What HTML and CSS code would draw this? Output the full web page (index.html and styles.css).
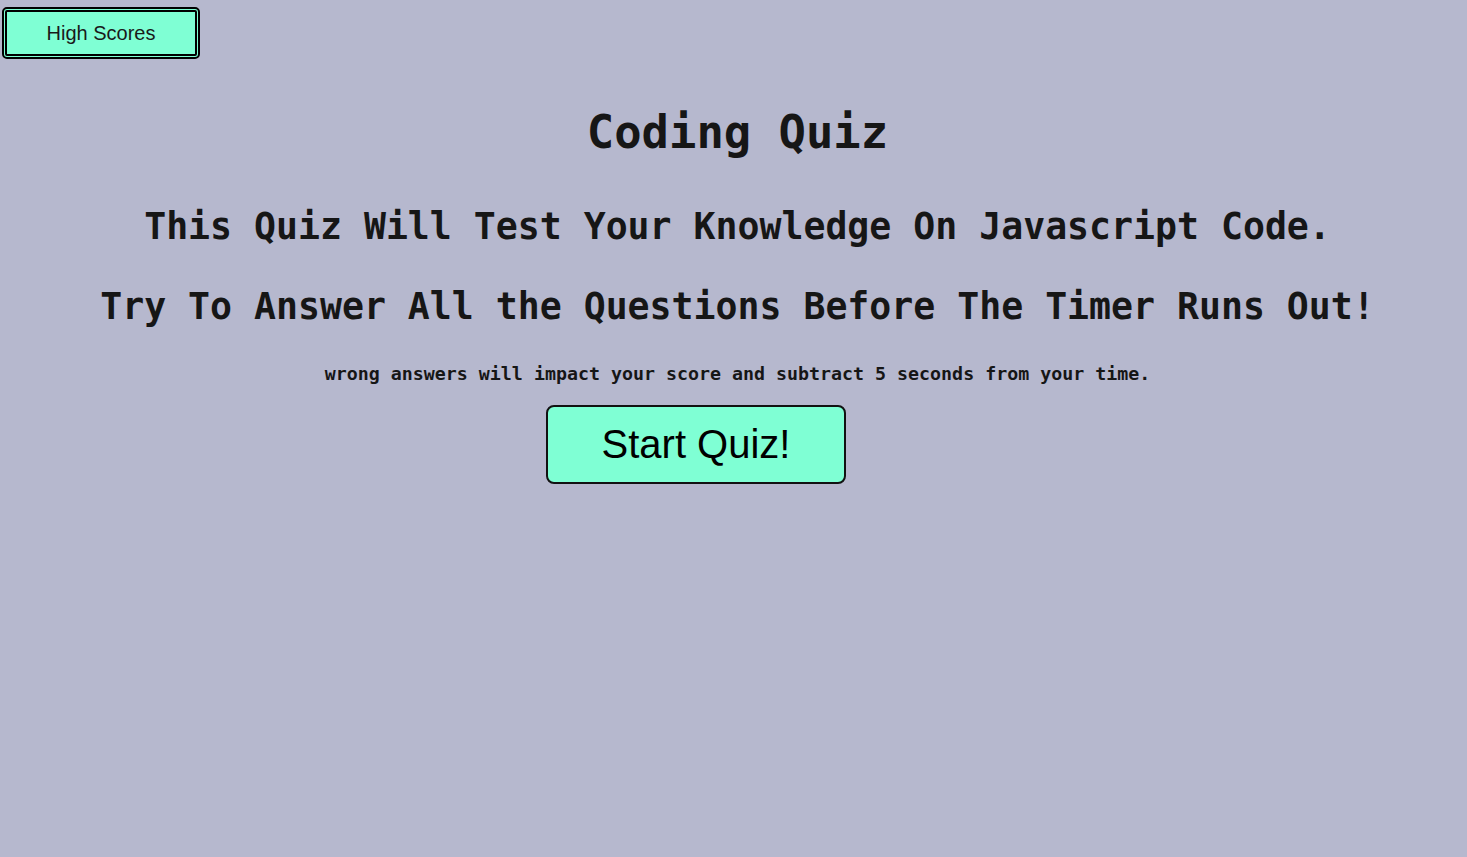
FILE: index.html
```html
<!DOCTYPE html>
<html lang="en">
<head>
<meta charset="utf-8">
<title>Coding Quiz</title>
<link rel="stylesheet" href="styles.css">
</head>
<body>
<header class="top">
  <button class="scores-btn">High Scores</button>
</header>
<main class="intro">
  <h1 class="title">Coding Quiz</h1>
  <h2 class="lead">This Quiz Will Test Your Knowledge On Javascript Code.</h2>
  <h2 class="lead lead-second">Try To Answer All the Questions Before The Timer Runs Out!</h2>
  <p class="note">wrong answers will impact your score and subtract 5 seconds from your time.</p>
  <div class="actions">
    <button class="start-btn">Start Quiz!</button>
  </div>
</main>
</body>
</html>
```
FILE: styles.css
```css
html, body {
  margin: 0;
  padding: 0;
}
body {
  background: #b6b8ce;
  color: #161616;
  min-height: 857px;
}
.top {
  display: flex;
  padding: 7px 0 0 2px;
}
.scores-btn {
  width: 198px;
  height: 52px;
  box-sizing: border-box;
  border: 5px double #000;
  border-radius: 5px;
  background: #7fffd4;
  font-family: "Liberation Sans", Arial, sans-serif;
  font-size: 20px;
  color: #1a1a1a;
  padding: 0;
  cursor: pointer;
}
.intro {
  padding-left: 8px;
  display: flex;
  flex-direction: column;
  align-items: center;
  text-align: center;
  font-family: "DejaVu Sans Mono", monospace;
  font-weight: bold;
}
.title {
  margin: 47px 0 0;
  font-size: 45.5px;
  line-height: 54px;
  font-weight: bold;
}
.lead {
  margin: 45px 0 0;
  font-size: 36.5px;
  line-height: 44px;
  font-weight: bold;
  white-space: nowrap;
}
.lead-second {
  margin-top: 36px;
}
.note {
  margin: 33px 0 0;
  font-size: 18.3px;
  line-height: 24px;
  white-space: nowrap;
}
.actions {
  align-self: stretch;
  display: flex;
  margin-top: 19px;
}
.start-btn {
  margin-left: 538px;
  width: 300px;
  height: 79px;
  box-sizing: border-box;
  border: 2px solid #111;
  border-radius: 8px;
  background: #7fffd4;
  font-family: "Liberation Sans", Arial, sans-serif;
  font-size: 40px;
  color: #000;
  padding: 0;
  cursor: pointer;
}
```
